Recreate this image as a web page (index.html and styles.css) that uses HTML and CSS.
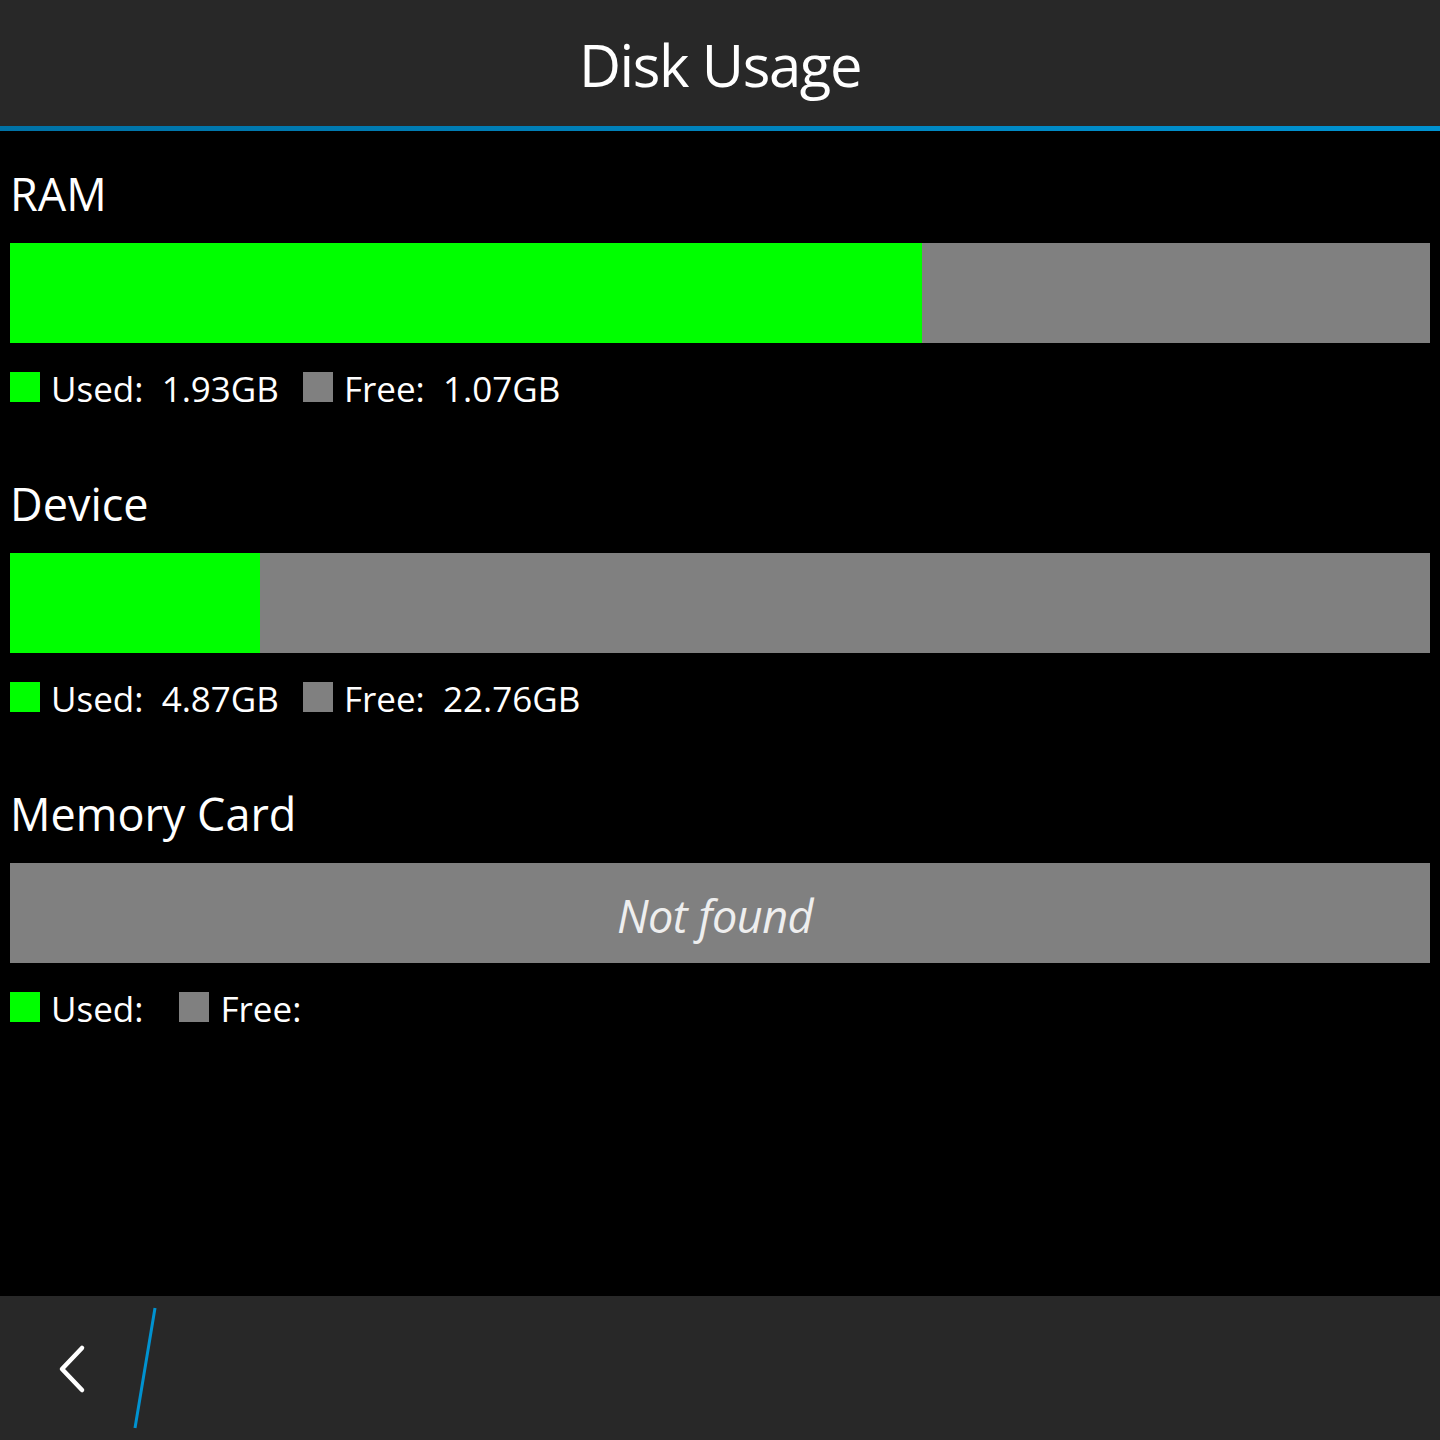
FILE: index.html
```html
<!DOCTYPE html>
<html>
<head>
<meta charset="utf-8">
<link rel="stylesheet" href="styles.css">
</head>
<body>
<div class="app">
  <header class="titlebar">
    <h1 class="title">Disk Usage</h1>
  </header>
  <div class="accent"></div>
  <main class="content">
    <section class="section">
      <h2 class="label">RAM</h2>
      <div class="bar"><div class="used" style="width:912px"></div></div>
      <div class="legend">
        <span class="swatch green"></span><span class="ltext">Used:&nbsp; 1.93GB</span>
        <span class="swatch gray"></span><span class="ltext">Free:&nbsp; 1.07GB</span>
      </div>
    </section>
    <section class="section">
      <h2 class="label">Device</h2>
      <div class="bar"><div class="used" style="width:250px"></div></div>
      <div class="legend">
        <span class="swatch green"></span><span class="ltext">Used:&nbsp; 4.87GB</span>
        <span class="swatch gray"></span><span class="ltext">Free:&nbsp; 22.76GB</span>
      </div>
    </section>
    <section class="section">
      <h2 class="label">Memory Card</h2>
      <div class="bar empty"><span class="notfound">Not found</span></div>
      <div class="legend">
        <span class="swatch green"></span><span class="ltext wide">Used:</span>
        <span class="swatch gray"></span><span class="ltext">Free:</span>
      </div>
    </section>
  </main>
  <footer class="actionbar">
    <div class="back">
      <svg width="40" height="60" viewBox="0 0 40 60">
        <polyline points="32,10 12,31 32,52" fill="none" stroke="#ffffff" stroke-width="4.5" stroke-linecap="round" stroke-linejoin="round"/>
      </svg>
    </div>
    <svg class="slash" width="30" height="124" viewBox="0 0 30 124">
      <line x1="24" y1="2" x2="4" y2="122" stroke="#0092d0" stroke-width="3"/>
    </svg>
  </footer>
</div>
</body>
</html>
```
FILE: styles.css
```css
* { box-sizing: border-box; }
html, body { margin: 0; padding: 0; background: #000; }
body { font-family: "Open Sans", "Noto Sans", sans-serif; color: #fff; }
.app { width: 1440px; height: 1440px; display: flex; flex-direction: column; background: #000; }
.titlebar { height: 126px; background: #282828; display: flex; align-items: center; justify-content: center; }
.title { margin: 0; font-weight: 400; font-size: 58px; letter-spacing: -1.4px; color: #fff; line-height: 1; padding-top: 4px; }
.accent { height: 5px; background: linear-gradient(to right, #0072a6, #0093d2); }
.content { flex: 1; padding: 0 10px; }
.section { height: 310px; padding-top: 33px; }
.label { margin: 0; font-weight: 400; font-size: 45px; line-height: 60px; height: 60px; letter-spacing: 0; padding-left: 0; }
.bar { margin-top: 19px; height: 100px; background: #808080; display: flex; align-items: center; }
.used { height: 100%; background: #00ff00; }
.bar.empty { justify-content: center; }
.notfound { font-style: italic; font-size: 45px; color: #eeeeee; letter-spacing: -0.5px; padding-top: 4px; margin-left: -10px; }
.legend { margin-top: 29px; display: flex; align-items: center; height: 30px; }
.swatch { width: 30px; height: 30px; flex: none; }
.swatch.green { background: #00ff00; }
.swatch.gray { background: #808080; }
.ltext { font-size: 35px; margin-left: 11px; margin-right: 24px; line-height: 30px; letter-spacing: 0; padding-top: 4px; white-space: pre; }
.ltext.wide { margin-right: 36px; }
.actionbar { height: 144px; background: #282828; display: flex; align-items: center; }
.back { width: 40px; height: 60px; margin-left: 50px; }
.back svg { display: block; }
.slash { margin-left: 41px; display: block; }
```
